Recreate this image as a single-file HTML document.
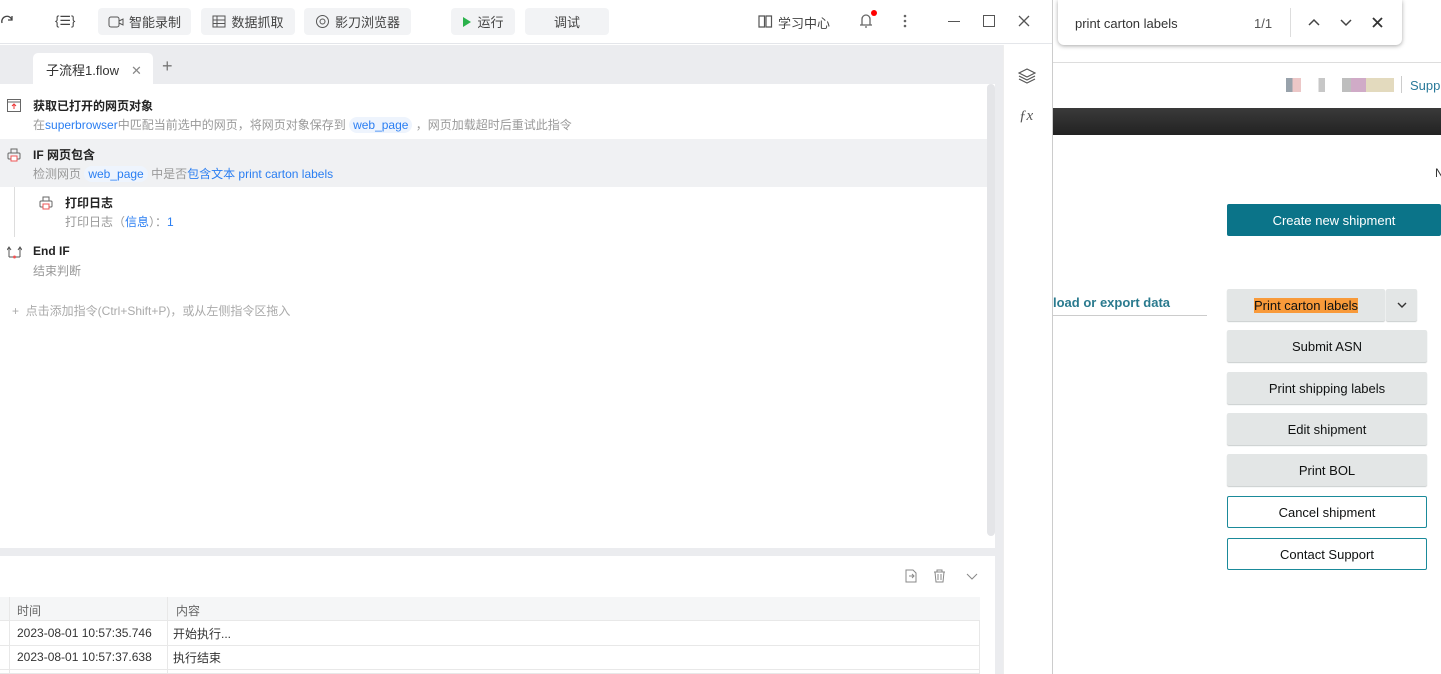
<!DOCTYPE html>
<html><head><meta charset="utf-8"><style>
*{box-sizing:border-box;margin:0;padding:0}
body{width:1441px;height:674px;position:relative;overflow:hidden;background:#fff;font-family:"Liberation Sans","Noto Sans CJK SC",sans-serif;font-size:12px;color:#333}
.a{position:absolute}
.tb{height:44px;top:0;left:0;width:1052px;background:#fff;border-bottom:1px solid #e4e6ea}
.btn{position:absolute;top:8px;height:27px;background:#f2f3f5;border-radius:4px;font-size:13px;color:#444;display:flex;align-items:center;justify-content:center;gap:5px}
.t{font-weight:bold;font-size:12px;color:#222}
.s{font-size:12px;color:#999}
.b{color:#2a7ef2}
.chip{background:#eef4fd;border-radius:8px;padding:1px 4px;color:#2a7ef2}
.ab{position:absolute;left:1227px;width:200px;height:32px;background:#e3e6e6;border-radius:2px;box-shadow:0 1px 1px #c8cccc;font-size:13px;color:#0f1111;display:flex;align-items:center;justify-content:center}
.ab.w{background:#fff;border:1px solid #1a8a9a;box-shadow:none}
</style></head><body>
<div class="a tb">
 <svg class="a" style="left:0;top:14px" width="14" height="14"><path d="M12 6A5 5 0 102 9M12 2v4H8" fill="none" stroke="#444" stroke-width="1.3"/></svg>
 <div class="a" style="left:55px;top:13px;font-size:13px;color:#444">{☰}</div>
 <div class="btn" style="left:98px;width:93px"><svg width="16" height="12"><rect x="1" y="1" width="10" height="10" rx="2" fill="none" stroke="#555"/><path d="M11 5l4-2v6l-4-2" fill="none" stroke="#555"/></svg>智能录制</div>
 <div class="btn" style="left:201px;width:94px"><svg width="14" height="13"><rect x="1" y="1" width="12" height="11" fill="none" stroke="#555"/><path d="M1 5h12M1 8.5h12M5 1v11" stroke="#555"/></svg>数据抓取</div>
 <div class="btn" style="left:304px;width:107px"><svg width="15" height="15"><circle cx="7.5" cy="7.5" r="6" fill="none" stroke="#555"/><circle cx="7.5" cy="7.5" r="2.5" fill="none" stroke="#555"/></svg>影刀浏览器</div>
 <div class="btn" style="left:451px;width:64px"><svg width="10" height="12"><path d="M1 1l8 5-8 5z" fill="#2bb24c"/></svg>运行</div>
 <div class="btn" style="left:525px;width:84px">调试</div>
 <svg class="a" style="left:758px;top:15px" width="15" height="13"><path d="M1 1h5.5v11H1zM8 1h5.5v11H8z" fill="none" stroke="#555" stroke-width="1.2"/></svg>
 <div class="a" style="left:778px;top:13px;font-size:13px;color:#444">学习中心</div>
 <svg class="a" style="left:857px;top:10px" width="20" height="20"><path d="M3 15h12M5 15V9a4 4 0 018 0v6M8 17h2" fill="none" stroke="#666" stroke-width="1.3"/><circle cx="17" cy="3" r="3" fill="#f00"/></svg>
 <svg class="a" style="left:903px;top:14px" width="4" height="16"><circle cx="2" cy="2" r="1.3" fill="#666"/><circle cx="2" cy="7" r="1.3" fill="#666"/><circle cx="2" cy="12" r="1.3" fill="#666"/></svg>
 <div class="a" style="left:948px;top:21px;width:12px;height:1px;background:#555"></div>
 <div class="a" style="left:983px;top:15px;width:12px;height:12px;border:1.3px solid #555"></div>
 <svg class="a" style="left:1018px;top:15px" width="12" height="12"><path d="M1 1l10 10M11 1L1 11" stroke="#555" stroke-width="1.3"/></svg>
</div>
<div class="a" style="left:0;top:45px;width:1003px;height:39px;background:#ebecef"></div>
<div class="a" style="left:33px;top:53px;width:120px;height:31px;background:#fff;border-radius:5px 5px 0 0;font-size:13px;color:#333;padding:7px 0 0 13px">子流程1.flow<span style="color:#888;margin-left:12px">✕</span></div>
<div class="a" style="left:162px;top:56px;font-size:18px;color:#777">+</div>
<div class="a" style="left:1003px;top:45px;width:49px;height:629px;background:#fff;border-left:1px solid #eee"></div>
<svg class="a" style="left:1018px;top:68px" width="18" height="16"><path d="M9 1l8 4-8 4-8-4z M1 8l8 4 8-4 M1 11l8 4 8-4" fill="none" stroke="#555" stroke-width="1.2"/></svg>
<div class="a" style="left:1019px;top:108px;font-style:italic;font-size:15px;color:#555;font-family:'Liberation Serif',serif">ƒx</div>
<div class="a" style="left:1052px;top:0;width:1px;height:674px;background:#ccc"></div>
<div class="a" style="left:987px;top:84px;width:8px;height:452px;background:#e4e5e8;border-radius:4px"></div>
<div class="a" style="left:0;top:139px;width:987px;height:48px;background:#f0f1f3"></div>
<svg class="a" style="left:7px;top:99px" width="14" height="13"><rect x="0.5" y="0.5" width="13" height="12" fill="none" stroke="#666"/><path d="M0.5 3h13" stroke="#666"/><path d="M7 5v5M5 7l2-2 2 2" stroke="#e33" fill="none"/></svg>
<div class="a t" style="left:33px;top:97px">获取已打开的网页对象</div>
<div class="a s" style="left:33px;top:116px">在<span class="b">superbrowser</span>中匹配当前选中的网页，将网页对象保存到 <span class="chip">web_page</span> ，网页加载超时后重试此指令</div>
<svg class="a" style="left:7px;top:148px" width="14" height="14"><rect x="1" y="5" width="12" height="6" rx="1" fill="none" stroke="#666"/><rect x="4" y="1" width="6" height="4" fill="none" stroke="#666"/><rect x="4" y="8" width="6" height="5" fill="#fff" stroke="#e55"/></svg>
<div class="a t" style="left:33px;top:146px">IF 网页包含</div>
<div class="a s" style="left:33px;top:165px">检测网页 <span class="chip">web_page</span> 中是否<span class="b">包含文本 print carton labels</span></div>
<div class="a" style="left:14px;top:187px;width:1px;height:50px;background:#ddd"></div>
<svg class="a" style="left:39px;top:196px" width="14" height="14"><rect x="1" y="5" width="12" height="6" rx="1" fill="none" stroke="#666"/><rect x="4" y="1" width="6" height="4" fill="none" stroke="#666"/><rect x="4" y="8" width="6" height="5" fill="#fff" stroke="#e55"/></svg>
<div class="a t" style="left:65px;top:194px">打印日志</div>
<div class="a s" style="left:65px;top:213px">打印日志（<span class="b">信息</span>）：<span class="b">1</span></div>
<svg class="a" style="left:7px;top:245px" width="15" height="14"><path d="M2 12V3M0 5l2-3 2 3M13 12V3M11 5l2-3 2 3M2 12h11" fill="none" stroke="#555"/><circle cx="7.5" cy="12" r="1.5" fill="#e55"/></svg>
<div class="a t" style="left:33px;top:244px">End IF</div>
<div class="a s" style="left:33px;top:262px">结束判断</div>
<div class="a s" style="left:12px;top:302px;color:#aaa">+&nbsp; 点击添加指令(Ctrl+Shift+P)，或从左侧指令区拖入</div>
<div class="a" style="left:0;top:548px;width:1003px;height:8px;background:#ebecef"></div>
<div class="a" style="left:995px;top:84px;width:8px;height:590px;background:#ebecef"></div>
<svg class="a" style="left:905px;top:569px" width="80" height="14"><path d="M1 1h7l3 3v9H1z" fill="none" stroke="#888"/><path d="M4 7h5M7 5l2 2-2 2" fill="none" stroke="#888"/><path d="M29 3h11M32 3V1h5v2M30 3l1 10h7l1-10M33 5v6M36 5v6" fill="none" stroke="#888"/><path d="M62 5l5 5 5-5" fill="none" stroke="#888"/></svg>
<div class="a" style="left:0;top:597px;width:980px;height:77px;border:1px solid #e8e8e8;border-left:none"></div>
<div class="a" style="left:0;top:597px;width:980px;height:24px;background:#f5f6f7;border-bottom:1px solid #e8e8e8"></div>
<div class="a" style="left:0;top:645px;width:980px;height:1px;background:#e8e8e8"></div>
<div class="a" style="left:0;top:669px;width:980px;height:1px;background:#e8e8e8"></div>
<div class="a" style="left:167px;top:597px;width:1px;height:77px;background:#e8e8e8"></div>
<div class="a" style="left:9px;top:597px;width:1px;height:77px;background:#e8e8e8"></div>
<div class="a" style="left:17px;top:602px;color:#666">时间</div><div class="a" style="left:176px;top:602px;color:#666">内容</div>
<div class="a" style="left:17px;top:626px">2023-08-01 10:57:35.746</div><div class="a" style="left:173px;top:625px">开始执行...</div>
<div class="a" style="left:17px;top:650px">2023-08-01 10:57:37.638</div><div class="a" style="left:173px;top:649px">执行结束</div>
<!-- browser -->
<div class="a" style="left:1053px;top:62px;width:388px;height:1px;background:#ddd"></div>
<div class="a" style="left:1058px;top:0;width:344px;height:45px;background:#fff;border-radius:0 0 6px 6px;box-shadow:0 1px 4px rgba(0,0,0,.35)"></div>
<div class="a" style="left:1075px;top:16px;font-size:13px;color:#333">print carton labels</div>
<div class="a" style="left:1254px;top:16px;font-size:13px;color:#555">1/1</div>
<div class="a" style="left:1290px;top:8px;width:1px;height:29px;background:#ddd"></div>
<svg class="a" style="left:1307px;top:16px" width="46" height="12"><path d="M2 9l5-5 5 5M34 4l5 5 5-5" fill="none" stroke="#444" stroke-width="1.5"/></svg>
<svg class="a" style="left:1372px;top:17px" width="11" height="11"><path d="M1 1l9 9M10 1L1 10" stroke="#333" stroke-width="1.8"/></svg>
<div class="a" style="left:1286px;top:78px;width:108px;height:14px;background:linear-gradient(90deg,#456 0 6%,#d99 6% 14%,#fff 14% 30%,#999 30% 36%,#fff 36% 52%,#888 52% 60%,#a69 60% 74%,#cb8 74% 100%);opacity:.55"></div>
<div class="a" style="left:1401px;top:76px;width:1px;height:17px;background:#ccc"></div>
<div class="a" style="left:1410px;top:78px;font-size:13px;color:#2a7a9a">Supp</div>
<div class="a" style="left:1053px;top:108px;width:388px;height:27px;background:linear-gradient(#3a3a3a,#222)"></div>
<div class="a" style="left:1435px;top:166px;font-size:12px">N</div>
<div class="a" style="left:1227px;top:204px;width:214px;height:32px;background:#0b7489;border-radius:2px;color:#fff;font-size:13px;display:flex;align-items:center;justify-content:center">Create new shipment</div>
<div class="a" style="left:1053px;top:295px;width:154px;height:21px;border-bottom:1px solid #ccc;font-weight:bold;font-size:13px;color:#2a7a8e">load or export data</div>
<div class="ab" style="top:289px;width:158px"><span style="background:#f89a3a">Print carton labels</span></div>
<div class="ab" style="top:289px;left:1386px;width:31px"><svg width="10" height="6"><path d="M1 1l4 4 4-4" fill="none" stroke="#333" stroke-width="1.4"/></svg></div>
<div class="ab" style="top:330px">Submit ASN</div>
<div class="ab" style="top:372px">Print shipping labels</div>
<div class="ab" style="top:413px">Edit shipment</div>
<div class="ab" style="top:454px">Print BOL</div>
<div class="ab w" style="top:496px">Cancel shipment</div>
<div class="ab w" style="top:538px">Contact Support</div>
</body></html>
